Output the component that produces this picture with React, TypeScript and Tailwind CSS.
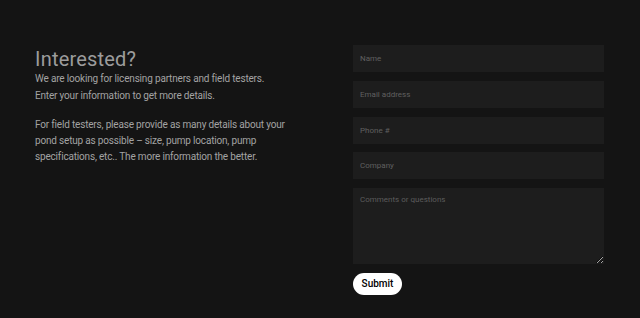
export default function App() {
  const fields = ["Name", "Email address", "Phone #", "Company"];
  return (
    <div
      className="w-[640px] h-[318px] bg-[#141414] flex pt-[45px] overflow-hidden"
      style={{ fontFamily: "Roboto, 'Liberation Sans', sans-serif" }}
    >
      {/* Left copy */}
      <div className="flex-1 pl-[35px] pt-[2px]">
        <h2 className="text-[20px] leading-[24px] text-[#9c9c9c] tracking-[0.2px]">
          Interested?
        </h2>
        <p className="text-[10px] leading-[16.5px] text-[#a3a3a3] tracking-[-0.18px]">
          We are looking for licensing partners and field testers.
          <br />
          Enter your information to get more details.
        </p>
        <p className="mt-[13px] text-[10px] leading-[16px] text-[#a3a3a3] tracking-[-0.18px]">
          For field testers, please provide as many details about your
          <br />
          pond setup as possible – size, pump location, pump
          <br />
          specifications, etc.. The more information the better.
        </p>
      </div>

      {/* Form */}
      <form className="w-[251px] mr-[36px] flex flex-col gap-[8.75px]">
        {fields.map((f) => (
          <input
            key={f}
            placeholder={f}
            className="h-[27px] w-full bg-[#1d1d1d] px-[7px] text-[8px] text-[#ccc] placeholder:text-[#606060] outline-none"
          />
        ))}
        <textarea
          placeholder="Comments or questions"
          className="block h-[76px] w-full bg-[#1d1d1d] px-[7px] pt-[6px] text-[8px] text-[#ccc] placeholder:text-[#5c5c5c] outline-none"
        />
        <div className="flex">
          <button
            type="button"
            className="h-[22px] w-[49px] rounded-full bg-white text-black text-[10px] font-medium"
          >
            Submit
          </button>
        </div>
      </form>
    </div>
  );
}
